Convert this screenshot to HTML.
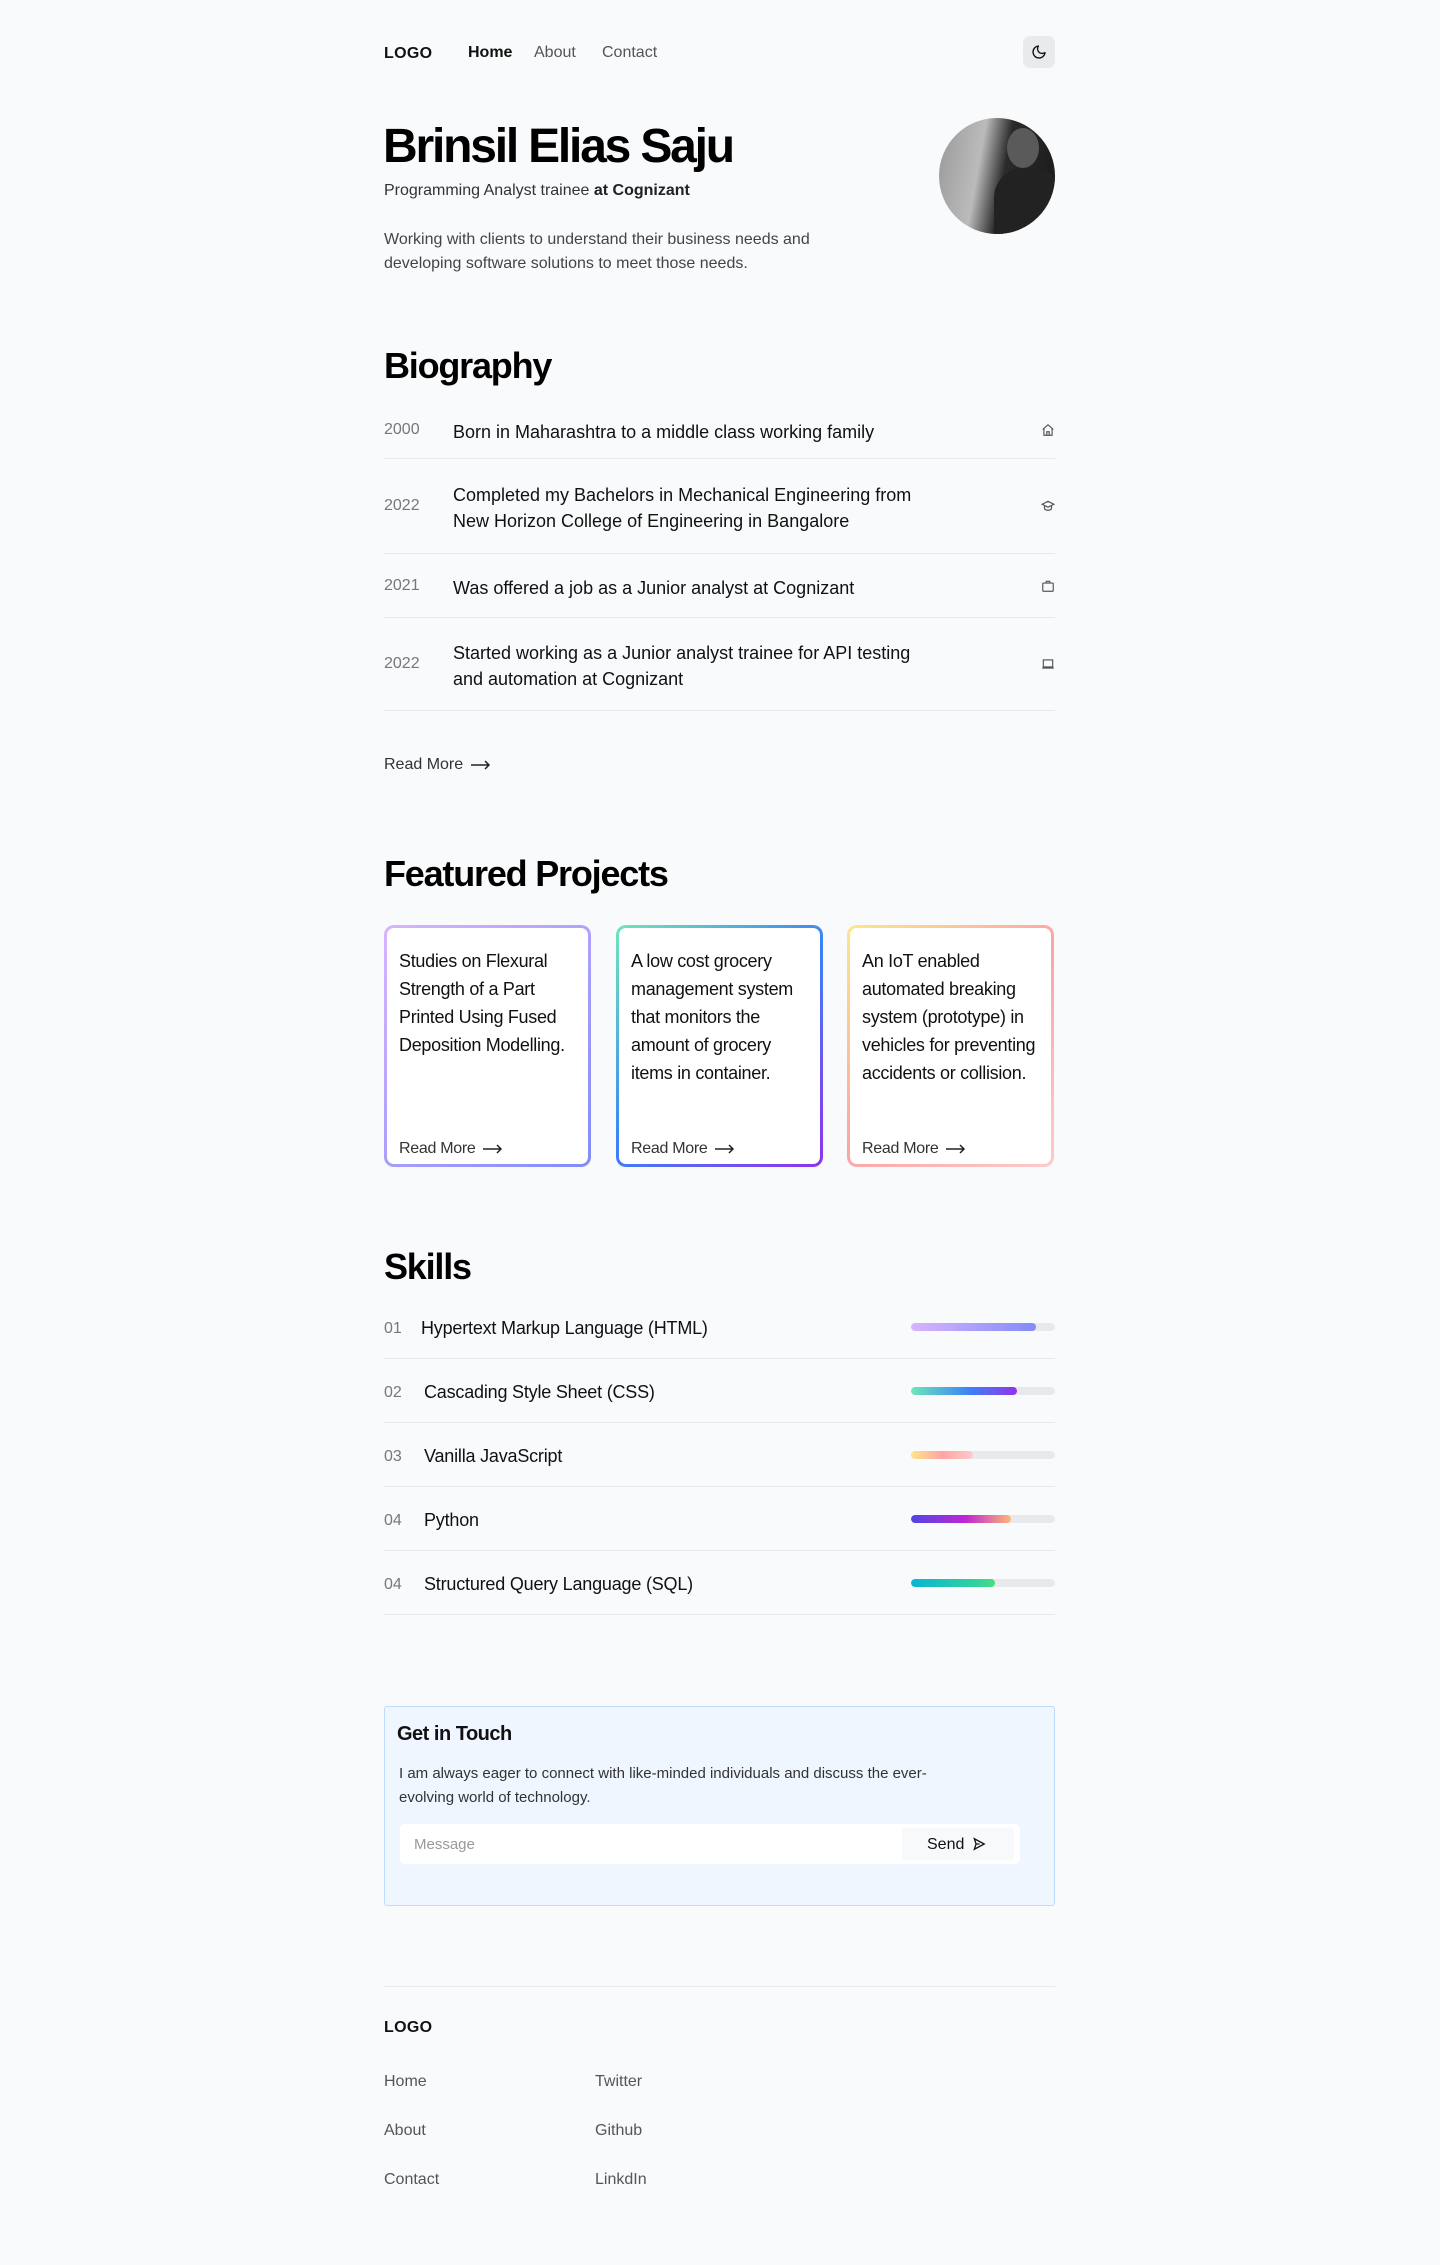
<!DOCTYPE html>
<html><head><meta charset="utf-8">
<style>
*{margin:0;padding:0;box-sizing:border-box}
body{width:1440px;height:2265px;background:#f9fafb;font-family:"Liberation Sans",sans-serif;color:#111;position:relative;overflow:hidden}
.a{position:absolute;white-space:nowrap}
.logo{font-weight:700;font-size:16px;letter-spacing:.3px}
.nav{font-size:16px;color:#555}
h1,h2{font-weight:700;letter-spacing:-1.2px;color:#000}
.row{position:absolute;left:384px;width:671px;border-bottom:1px solid #e8e9ec;display:flex;align-items:center}
.row .y{width:69px;font-size:16px;color:#777}
.row .t{font-size:18px;line-height:26px;color:#111;width:480px;white-space:normal;padding-top:4px}
.row svg{position:absolute;right:0}
.card{position:absolute;top:925px;width:207px;height:242px;border-radius:10px;padding:3px}
.card .in{background:#fff;border-radius:7px;height:100%;padding:19px 12px;font-size:18px;line-height:28px;position:relative;letter-spacing:-.3px}
.card .rm{position:absolute;left:12px;bottom:1px;font-size:16px;color:#333}
.sk{position:absolute;left:384px;width:671px;height:64px;border-bottom:1px solid #e8e9ec}
.sk .n{position:absolute;left:0;top:25px;font-size:16px;color:#777}
.sk .l{position:absolute;top:23px;font-size:18px;letter-spacing:-.2px}
.sk .bar{position:absolute;right:0;top:28px;width:144px;height:8px;border-radius:4px;background:#e8e9ec;overflow:hidden}
.sk .bar div{height:100%;border-radius:4px}
.arrow{display:inline-block;vertical-align:middle;margin-left:8px}
</style></head><body>

<div class="a logo" style="left:384px;top:45px">LOGO</div>
<div class="a nav" style="left:468px;top:44px;color:#111;font-weight:700">Home</div>
<div class="a nav" style="left:534px;top:44px">About</div>
<div class="a nav" style="left:602px;top:44px">Contact</div>
<div class="a" style="left:1023px;top:36px;width:32px;height:32px;border-radius:7px;background:#e9eaec;display:flex;align-items:center;justify-content:center">
<svg width="16" height="16" viewBox="0 0 24 24" fill="none" stroke="#111" stroke-width="2" stroke-linecap="round" stroke-linejoin="round"><path d="M21 12.8A9 9 0 1 1 11.2 3a7 7 0 0 0 9.8 9.8z"/></svg></div>

<h1 class="a" style="left:383px;top:119px;font-size:48px;letter-spacing:-2.2px">Brinsil Elias Saju</h1>
<div class="a" style="left:384px;top:182px;font-size:16px;color:#333">Programming Analyst trainee <b style="color:#222">at Cognizant</b></div>
<div class="a" style="left:384px;top:228px;font-size:16px;line-height:24px;color:#444;white-space:normal;width:480px">Working with clients to understand their business needs and developing software solutions to meet those needs.</div>
<div class="a" style="left:939px;top:118px;width:116px;height:116px;border-radius:50%;overflow:hidden;background:linear-gradient(100deg,#999 0,#bbb 35%,#2a2a2a 55%,#1a1a1a 100%)">
<div style="position:absolute;left:68px;top:10px;width:32px;height:40px;border-radius:50%;background:#5a5a5a"></div>
<div style="position:absolute;left:55px;top:50px;width:70px;height:80px;border-radius:30px 30px 0 0;background:#222"></div></div>

<h2 class="a" style="left:384px;top:345px;font-size:36px">Biography</h2>

<div class="row" style="top:401px;height:58px"><div class="y">2000</div><div class="t">Born in Maharashtra to a middle class working family</div>
<svg width="14" height="14" viewBox="0 0 24 24" fill="none" stroke="#555" stroke-width="2"><path d="M3 11l9-8 9 8M5 9v12h14V9M10 21v-6h4v6"/></svg></div>
<div class="row" style="top:459px;height:95px"><div class="y">2022</div><div class="t">Completed my Bachelors in Mechanical Engineering from New Horizon College of Engineering in Bangalore</div>
<svg width="14" height="14" viewBox="0 0 24 24" fill="none" stroke="#555" stroke-width="2"><path d="M2 9l10-5 10 5-10 5zM6 11v6c3 3 9 3 12 0v-6"/></svg></div>
<div class="row" style="top:554px;height:64px"><div class="y">2021</div><div class="t">Was offered a job as a Junior analyst at Cognizant</div>
<svg width="14" height="14" viewBox="0 0 24 24" fill="none" stroke="#555" stroke-width="2"><rect x="3" y="7" width="18" height="14" rx="1"/><path d="M9 7V4h6v3"/></svg></div>
<div class="row" style="top:618px;height:93px"><div class="y">2022</div><div class="t">Started working as a Junior analyst trainee for API testing and automation at Cognizant</div>
<svg width="14" height="14" viewBox="0 0 24 24" fill="none" stroke="#555" stroke-width="2"><rect x="4" y="5" width="16" height="12"/><path d="M2 19h20"/></svg></div>

<div class="a" style="left:384px;top:756px;font-size:16px;color:#333">Read More<svg class="arrow" width="20" height="10" viewBox="0 0 20 10" fill="none" stroke="#222" stroke-width="1.5"><path d="M0 5h18M14 1l4 4-4 4"/></svg></div>

<h2 class="a" style="left:384px;top:853px;font-size:36px">Featured Projects</h2>

<div class="card" style="left:384px;background:linear-gradient(135deg,#d8b4fe,#818cf8)"><div class="in">Studies on Flexural Strength of a Part Printed Using Fused Deposition Modelling.<div class="rm">Read More<svg class="arrow" width="20" height="10" viewBox="0 0 20 10" fill="none" stroke="#222" stroke-width="1.5"><path d="M0 5h18M14 1l4 4-4 4"/></svg></div></div></div>
<div class="card" style="left:616px;background:linear-gradient(135deg,#6ee7b7,#3b82f6 50%,#9333ea)"><div class="in">A low cost grocery management system that monitors the amount of grocery items in container.<div class="rm">Read More<svg class="arrow" width="20" height="10" viewBox="0 0 20 10" fill="none" stroke="#222" stroke-width="1.5"><path d="M0 5h18M14 1l4 4-4 4"/></svg></div></div></div>
<div class="card" style="left:847px;background:linear-gradient(135deg,#fde68a,#fca5a5 50%,#fecaca)"><div class="in">An IoT enabled automated breaking system (prototype) in vehicles for preventing accidents or collision.<div class="rm">Read More<svg class="arrow" width="20" height="10" viewBox="0 0 20 10" fill="none" stroke="#222" stroke-width="1.5"><path d="M0 5h18M14 1l4 4-4 4"/></svg></div></div></div>

<h2 class="a" style="left:384px;top:1246px;font-size:36px">Skills</h2>

<div class="sk" style="top:1295px"><div class="n">01</div><div class="l" style="left:37px">Hypertext Markup Language (HTML)</div><div class="bar"><div style="width:125px;background:linear-gradient(90deg,#d8b4fe,#818cf8)"></div></div></div>
<div class="sk" style="top:1359px"><div class="n">02</div><div class="l" style="left:40px">Cascading Style Sheet (CSS)</div><div class="bar"><div style="width:106px;background:linear-gradient(90deg,#6ee7b7,#3b82f6 55%,#9333ea)"></div></div></div>
<div class="sk" style="top:1423px"><div class="n">03</div><div class="l" style="left:40px">Vanilla JavaScript</div><div class="bar"><div style="width:62px;background:linear-gradient(90deg,#fde68a,#fca5a5,#fecaca)"></div></div></div>
<div class="sk" style="top:1487px"><div class="n">04</div><div class="l" style="left:40px">Python</div><div class="bar"><div style="width:100px;background:linear-gradient(90deg,#4f46e5,#c026d3 55%,#fdba74)"></div></div></div>
<div class="sk" style="top:1551px"><div class="n">04</div><div class="l" style="left:40px">Structured Query Language (SQL)</div><div class="bar"><div style="width:84px;background:linear-gradient(90deg,#06b6d4,#34d399 80%,#4ade80)"></div></div></div>

<div class="a" style="left:384px;top:1706px;width:671px;height:200px;background:#eff6ff;border:1px solid #bfdbfe;border-radius:3px">
<div class="a" style="left:12px;top:16px;font-size:20px;font-weight:700;letter-spacing:-.5px">Get in Touch</div>
<div class="a" style="left:14px;top:55px;font-size:15px;line-height:24px;color:#333;white-space:normal;width:540px">I am always eager to connect with like-minded individuals and discuss the ever-evolving world of technology.</div>
<div class="a" style="left:15px;top:117px;width:620px;height:40px;background:#fff;border-radius:5px">
<div class="a" style="left:14px;top:12px;font-size:15px;color:#999">Message</div>
<div class="a" style="left:502px;top:4px;width:112px;height:32px;background:#f8f9fb;border-radius:4px;font-size:16px;color:#111;padding:8px 0 0 25px">Send <svg width="14" height="14" viewBox="0 0 24 24" fill="none" stroke="#111" stroke-width="2.2" style="vertical-align:-2px;margin-left:3px"><path d="M4 3l17 9-17 9 3-9z M7 12h6"/></svg></div>
</div></div>

<div class="a" style="left:384px;top:1986px;width:671px;height:1px;background:#e8e9ec"></div>
<div class="a logo" style="left:384px;top:2019px">LOGO</div>
<div class="a nav" style="left:384px;top:2073px">Home</div>
<div class="a nav" style="left:384px;top:2122px">About</div>
<div class="a nav" style="left:384px;top:2171px">Contact</div>
<div class="a nav" style="left:595px;top:2073px">Twitter</div>
<div class="a nav" style="left:595px;top:2122px">Github</div>
<div class="a nav" style="left:595px;top:2171px">LinkdIn</div>
</body></html>
